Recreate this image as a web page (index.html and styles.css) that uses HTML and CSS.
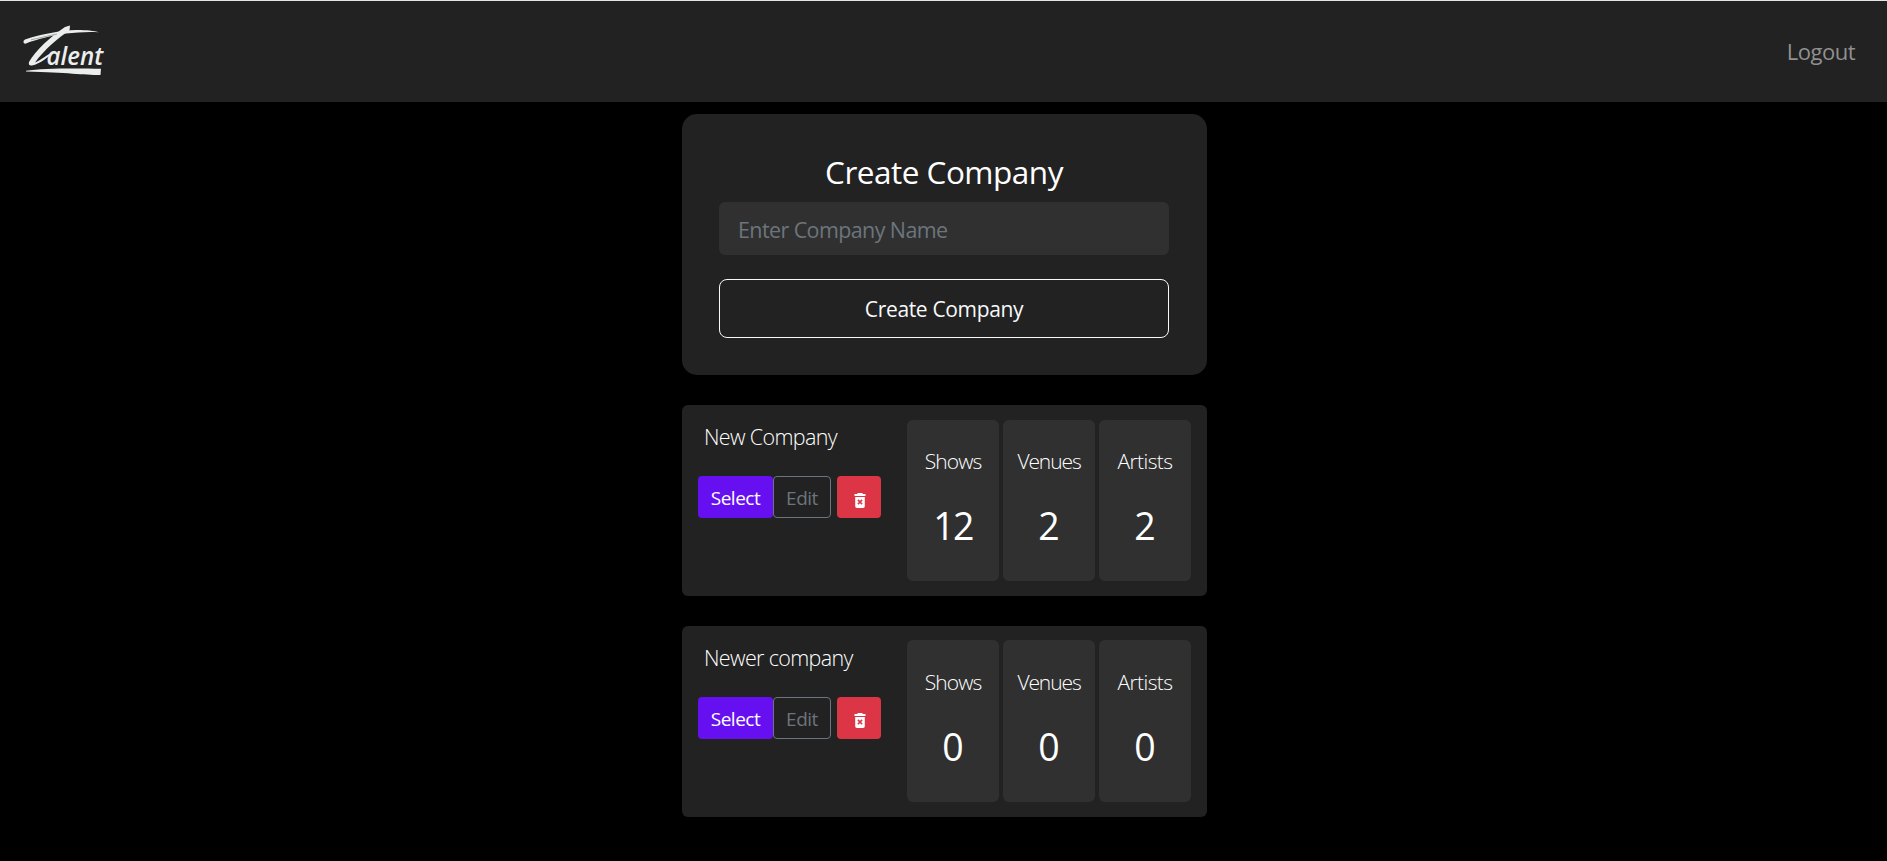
FILE: index.html
```
<!DOCTYPE html>
<html lang="en">
<head>
<meta charset="utf-8">
<title>Talent</title>
<link rel="stylesheet" href="styles.css">
</head>
<body>
<nav class="navbar">
  <svg class="logo" width="84" height="54" viewBox="0 0 84 54" role="img" aria-label="Talent">
    <g fill="#eceeee">
      <path d="M.5 17.500Q0 15.500 2 14.500C18 9 38 5.500 53 5C62 4.900 71 5.700 76 7.300C65 6.700 54 7.300 43 8.600C28 10.700 14 14.300 3 18.500Q1 19 .5 17.500Z"/>
      <path d="M47 .5L46.500 5.500C36 12 21 25 12 37.500C18 35 24 30 32 25.500C26 31.500 17 39 9 40.500Q5 41 6 37C12 26 28 11 42 2Z"/>
      <path d="M3 45.800C20 42.800 55 43.300 78 43.700L77.500 50C60 50 45 47.500 3 46.500Z"/>
    </g>
    <path d="M8 14.800L34 9" stroke="#222" stroke-width=".6" opacity=".6"/>
    <text class="logo-text" transform="translate(23.500 39.500) scale(.92 1)" textLength="61.500" lengthAdjust="spacingAndGlyphs">alent</text>
  </svg>
  <a class="logout">Logout</a>
</nav>
<main class="page">
  <form class="create">
    <h1 class="create-title">Create Company</h1>
    <input class="create-input" type="text" placeholder="Enter Company Name">
    <button class="create-button" type="button">Create Company</button>
  </form>

  <section class="company">
    <div class="company-info">
      <h2 class="company-name">New Company</h2>
      <div class="actions">
        <button class="btn btn-select" type="button">Select</button>
        <button class="btn btn-edit" type="button">Edit</button>
        <button class="btn btn-delete" type="button" aria-label="Delete">
          <svg width="12" height="15" viewBox="0 0 12 15"><path fill="#fff" d="M3.500 0h5v1H11.500v2H.5V1h3zM1.200 4h9.600v9.300q0 1.700-1.700 1.700H2.900q-1.700 0-1.700-1.700z"/><path d="M3.900 6.900l4.200 4.200M8.100 6.900l-4.200 4.200" stroke="#dc3545" stroke-width="1.500"/></svg>
        </button>
      </div>
    </div>
    <div class="stats">
      <div class="stat"><span class="label">Shows</span><span class="value value-wide">12</span></div>
      <div class="stat"><span class="label label-venues">Venues</span><span class="value">2</span></div>
      <div class="stat"><span class="label label-artists">Artists</span><span class="value">2</span></div>
    </div>
  </section>

  <section class="company company-last">
    <div class="company-info">
      <h2 class="company-name">Newer company</h2>
      <div class="actions">
        <button class="btn btn-select" type="button">Select</button>
        <button class="btn btn-edit" type="button">Edit</button>
        <button class="btn btn-delete" type="button" aria-label="Delete">
          <svg width="12" height="15" viewBox="0 0 12 15"><path fill="#fff" d="M3.500 0h5v1H11.500v2H.5V1h3zM1.200 4h9.600v9.300q0 1.700-1.700 1.700H2.900q-1.700 0-1.700-1.700z"/><path d="M3.900 6.900l4.200 4.200M8.100 6.900l-4.200 4.200" stroke="#dc3545" stroke-width="1.500"/></svg>
        </button>
      </div>
    </div>
    <div class="stats">
      <div class="stat"><span class="label">Shows</span><span class="value">0</span></div>
      <div class="stat"><span class="label label-venues">Venues</span><span class="value">0</span></div>
      <div class="stat"><span class="label label-artists">Artists</span><span class="value">0</span></div>
    </div>
  </section>
</main>
</body>
</html>
```
FILE: styles.css
```
* { box-sizing: border-box; }
body {
  margin: 0;
  min-height: 861px;
  background: #000;
  color: #fff;
  font-family: "Open Sans", "Noto Sans", sans-serif;
}
button, input { font-family: inherit; margin: 0; }

.navbar {
  display: flex;
  justify-content: space-between;
  height: 102px;
  padding: 24px 32px 0 23px;
  background: #222;
  border-top: 1px solid #dfe6e3;
}
.logo { display: block; overflow: visible; }
.logo-text {
  font: italic 600 25px "Open Sans", sans-serif;
  fill: #eceeee;
}
.logout {
  margin-top: 11px;
  font-size: 22px;
  line-height: 30px;
  letter-spacing: -.5px;
  color: #909090;
}

.page {
  width: 525px;
  margin: 12px 0 0 682px;
}
.create {
  height: 261px;
  padding: 38px 38px 0 37px;
  border-radius: 15px;
  background: #222;
}
.create-title {
  margin: 0 0 10px;
  font-size: 31.5px;
  font-weight: 400;
  line-height: 40px;
  letter-spacing: -.5px;
  text-align: center;
}
.create-input {
  display: block;
  width: 450px;
  height: 53px;
  padding: 2px 18px 0 19px;
  border: 0;
  border-radius: 6px;
  background: #303030;
  font-size: 21.5px;
  letter-spacing: -.6px;
  color: #fff;
}
.create-input::placeholder { color: #6c757d; opacity: 1; }
.create-button {
  display: block;
  width: 450px;
  height: 59px;
  margin-top: 24px;
  padding: 0;
  border: 1px solid #f8f9fa;
  border-radius: 8px;
  background: transparent;
  font-size: 21px;
  letter-spacing: -.35px;
  color: #f8f9fa;
}

.company {
  display: flex;
  justify-content: space-between;
  height: 191px;
  margin-top: 30px;
  padding: 15px 16px;
  border-radius: 6px;
  background: #222;
}
.company-name {
  margin: 1px 0 23px 6px;
  font-size: 21.5px;
  font-weight: 300;
  line-height: 32px;
  letter-spacing: -.65px;
}
.actions { display: flex; }
.btn {
  height: 42px;
  padding: 2px 0 0;
  border: 1px solid transparent;
  border-radius: 4px;
  font-size: 19px;
  letter-spacing: -.5px;
  color: #fff;
}
.btn-select { width: 75px; background: #6610f2; }
.btn-edit { width: 58px; border-color: #6c757d; background: transparent; color: #6c757d; }
.btn-delete {
  display: flex;
  justify-content: center;
  width: 44px;
  margin-left: 6px;
  padding: 16px 0 0 1px;
  background: #dc3545;
}
.stats { display: flex; gap: 4px; height: 161px; }
.stat {
  display: flex;
  flex-direction: column;
  align-items: center;
  width: 92px;
  padding-top: 26px;
  border-radius: 6px;
  background: #303030;
}
.label {
  font-size: 21px;
  font-weight: 300;
  line-height: 30px;
  letter-spacing: -.9px;
}
.label-venues { letter-spacing: -1.1px; }
.label-artists { letter-spacing: -.6px; }
.value {
  margin-top: 28px;
  font-size: 37.5px;
  line-height: 44px;
}
.value-wide { letter-spacing: -1.8px; }

.company-last { padding-top: 14px; }
.company-last .company-name { margin-top: 2px; }
.company-last .stats { height: 162px; }
.company-last .stat { padding-top: 27px; }
.company-last .btn-delete { padding-top: 15px; }
```
